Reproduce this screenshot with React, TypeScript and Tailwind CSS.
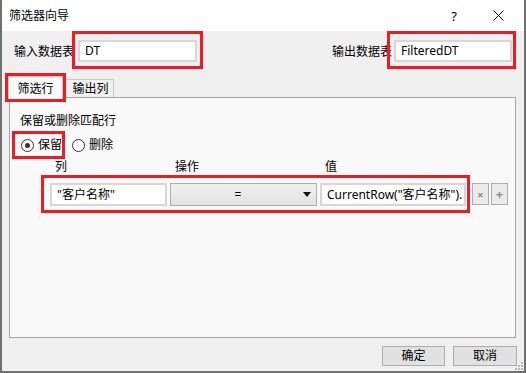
import React from "react"

const red = "border-[3px] border-[#ed1c24]"

function TextBox({ value, className = "" }: { value: string; className?: string }) {
  return (
    <div
      className={`h-[22px] bg-white border-2 border-[#d7d7d7] flex items-center pl-[5px] overflow-hidden whitespace-nowrap text-[12px] leading-[16px] ${className}`}
    >
      <span>{value}</span>
    </div>
  )
}

function Radio({ checked, label }: { checked: boolean; label: string }) {
  return (
    <div className="flex items-center gap-[4px]">
      <div className="w-[13px] h-[13px] rounded-full border border-[#333] bg-white flex items-center justify-center">
        {checked && <div className="w-[5px] h-[5px] rounded-full bg-[#333]" />}
      </div>
      <span className="leading-[16px]">{label}</span>
    </div>
  )
}

export default function App() {
  return (
    <div className="w-[526px] h-[373px] flex flex-col bg-[#f0f0f0] border-x-2 border-b-2 border-[#707070] font-['Noto_Sans','Noto_Sans_CJK_SC',sans-serif] text-[12px] text-black overflow-hidden">
      {/* title bar */}
      <div className="h-[31px] bg-white flex items-center pl-[7px] shrink-0">
        <span className="leading-[16px]">筛选器向导</span>
        <span className="ml-auto mr-[36px] text-[13px] leading-[16px]">?</span>
        <svg width="11" height="11" viewBox="0 0 11 11" className="mr-[20px]">
          <path d="M0.5 0.5 L10.5 10.5 M10.5 0.5 L0.5 10.5" stroke="#111" strokeWidth="1" />
        </svg>
      </div>

      {/* data tables */}
      <div className="h-[38px] flex items-stretch pl-[12px] pr-[8px] shrink-0">
        <span className="w-[58px] whitespace-nowrap self-center leading-[16px] mt-[3px]">输入数据表</span>
        <div className={`${red} pt-[6px] px-[3px]`}>
          <TextBox value="DT" className="w-[119px]" />
        </div>
        <span className="ml-auto -mr-[5px] whitespace-nowrap self-center leading-[16px] mt-[3px]">输出数据表</span>
        <div className={`relative ${red} pt-[6px] pl-[4px] pr-[1px]`}>
          <TextBox value="FilteredDT" className="w-[118px] pl-[2px]" />
        </div>
      </div>

      {/* tabs */}
      <div className="mt-[4px] h-[24px] flex items-start pl-[3px] shrink-0">
        <div className={`relative z-10 ${red} w-[61px] h-[29px]`}>
          <div className="h-full bg-[#f9f9f9] border-x border-t border-[#c8c8c8] flex items-center justify-center pt-[1px]">
            <span className="leading-[16px]">筛选行</span>
          </div>
        </div>
        <div className="mt-[6px] -ml-[4px] pl-[4px] w-[52px] h-[18px] border-t border-r border-[#c8c8c8] flex items-center justify-center">
          <span className="leading-[16px] ml-[2px]">输出列</span>
        </div>
      </div>

      {/* panel */}
      <div className="ml-[7px] w-[507px] h-[241px] bg-[#f9f9f9] border border-[#a5a5a5] flex flex-col shrink-0">
        <span className="mt-[15px] ml-[10px] leading-[16px]">保留或删除匹配行</span>
        <div className="mt-[2px] ml-[2px] flex items-center">
          <div className={`${red} h-[28px] w-[53px] flex items-center pl-[6px]`}>
            <Radio checked label="保留" />
          </div>
          <div className="ml-[7px]">
            <Radio checked={false} label="删除" />
          </div>
        </div>

        <div className="h-[16px] flex items-center leading-[16px]">
          <span className="ml-[45px]">列</span>
          <span className="ml-[108px]">操作</span>
          <span className="ml-[126px]">值</span>
        </div>

        <div className="flex items-start">
          <div className={`ml-[31px] ${red} pt-[5px] pb-[4px] pl-[6px] pr-[1px] flex gap-[3px]`}>
            <TextBox value={'"客户名称"'} className="w-[117px] h-[23px]" />
            <div className="w-[147px] h-[23px] border border-[#acacac] bg-gradient-to-b from-[#efefef] to-[#e3e3e3] flex items-center">
              <span className="flex-1 text-center leading-[16px] pl-[2px]">=</span>
              <svg width="8" height="5" viewBox="0 0 8 5" className="mr-[5px]">
                <path d="M0 0 L8 0 L4 5 Z" fill="#111" />
              </svg>
            </div>
            <TextBox value={'CurrentRow("客户名称").'} className="w-[146px] h-[23px]" />
          </div>
          <div className="mt-[8px] ml-[2px] flex gap-[2px]">
            <div className="w-[17px] h-[22px] border border-[#adadad] bg-[#ebebeb] flex items-center justify-center text-[#8a8a8a] text-[11px] leading-none font-bold">
              ×
            </div>
            <div className="w-[17px] h-[22px] border border-[#adadad] bg-[#ebebeb] flex items-center justify-center text-[#8a8a8a] text-[13px] leading-none font-bold">
              +
            </div>
          </div>
        </div>
      </div>

      {/* footer */}
      <div className="mt-[8px] flex justify-end gap-[8px] pr-[7px] relative flex-1">
        <div className="w-[63px] h-[20px] border border-[#adadad] bg-[#e1e1e1] flex items-center justify-center leading-[16px]">
          确定
        </div>
        <div className="w-[64px] h-[20px] border border-[#adadad] bg-[#e1e1e1] flex items-center justify-center leading-[16px]">
          取消
        </div>
        <svg width="8" height="8" viewBox="0 0 8 8" className="absolute right-[1px] bottom-[1px]">
          <rect x="6" y="0" width="2" height="2" fill="#b8b8b8" />
          <rect x="3" y="3" width="2" height="2" fill="#b8b8b8" />
          <rect x="6" y="3" width="2" height="2" fill="#b8b8b8" />
          <rect x="0" y="6" width="2" height="2" fill="#b8b8b8" />
          <rect x="3" y="6" width="2" height="2" fill="#b8b8b8" />
          <rect x="6" y="6" width="2" height="2" fill="#b8b8b8" />
        </svg>
      </div>
    </div>
  )
}
